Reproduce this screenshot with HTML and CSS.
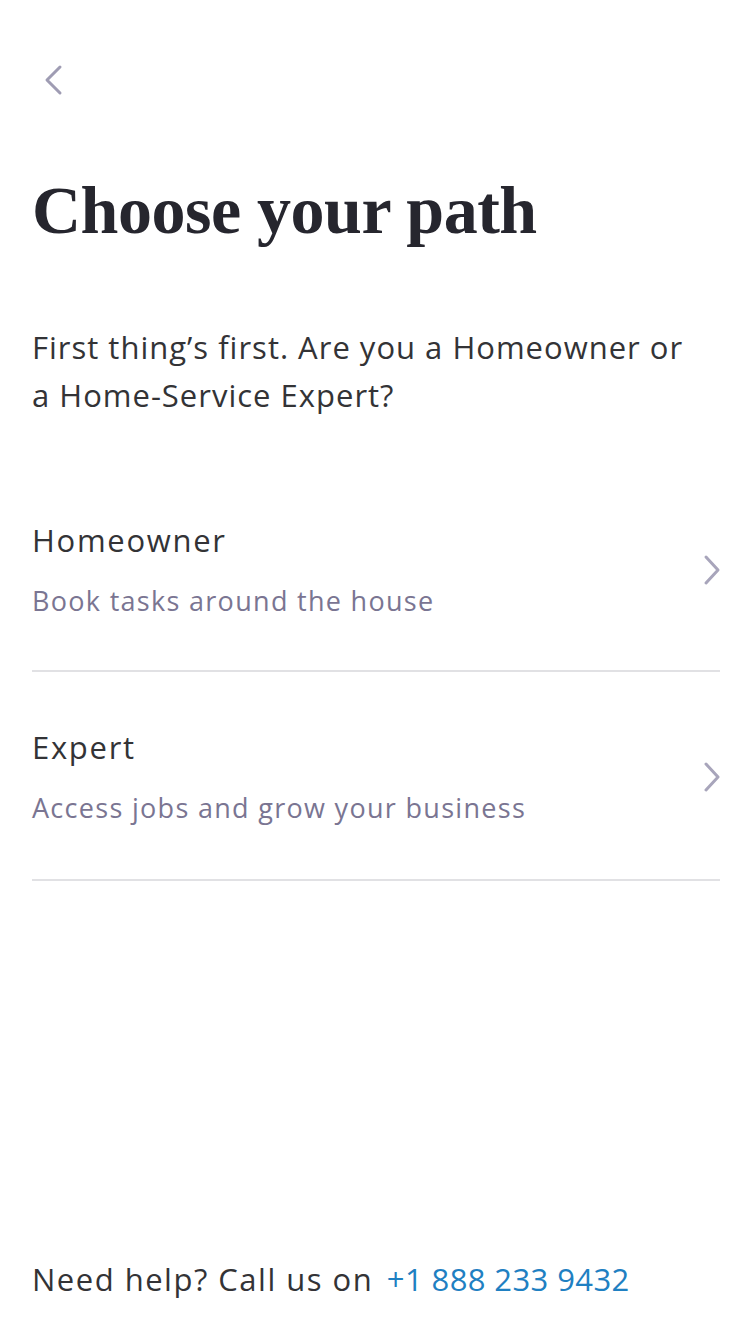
FILE: index.html
```html
<!DOCTYPE html>
<html>
<head>
<meta charset="utf-8">
<link rel="stylesheet" href="styles.css">
</head>
<body>
<div class="screen">
  <header class="top">
    <svg class="back" width="24" height="32" viewBox="0 0 24 32"><path d="M18 3 L5 16 L18 29" fill="none" stroke="#9f9cb3" stroke-width="3" stroke-linecap="round" stroke-linejoin="round"/></svg>
  </header>
  <h1 class="title">Choose your path</h1>
  <p class="intro">First thing’s first. Are you a Homeowner or a Home-Service Expert?</p>
  <ul class="options">
    <li class="option">
      <div class="texts">
        <div class="opt-title">Homeowner</div>
        <div class="opt-sub">Book tasks around the house</div>
      </div>
      <svg class="chev" width="20" height="32" viewBox="0 0 20 32"><path d="M4 3 L16 16 L4 29" fill="none" stroke="#a8a5bb" stroke-width="3" stroke-linecap="round" stroke-linejoin="round"/></svg>
    </li>
    <li class="option">
      <div class="texts">
        <div class="opt-title">Expert</div>
        <div class="opt-sub">Access jobs and grow your business</div>
      </div>
      <svg class="chev" width="20" height="32" viewBox="0 0 20 32"><path d="M4 3 L16 16 L4 29" fill="none" stroke="#a8a5bb" stroke-width="3" stroke-linecap="round" stroke-linejoin="round"/></svg>
    </li>
  </ul>
  <div class="spacer"></div>
  <footer class="help">Need help? Call us on <a class="phone">+1 888 233 9432</a></footer>
</div>
</body>
</html>
```
FILE: styles.css
```css
html, body {
  margin: 0;
  padding: 0;
  background: #ffffff;
}
.screen {
  width: 752px;
  height: 1334px;
  box-sizing: border-box;
  padding: 0 32px;
  display: flex;
  flex-direction: column;
  font-family: "Open Sans", "Noto Sans", sans-serif;
  color: #2f2f33;
}
.top {
  height: 64px;
  padding-top: 64px;
  box-sizing: content-box;
  display: flex;
  align-items: flex-start;
}
.back {
  display: block;
  margin-left: 10px;
}
.title {
  margin: 42px 0 0;
  font-family: "Liberation Serif", "DejaVu Serif", serif;
  font-weight: 700;
  font-size: 68px;
  line-height: 80px;
  color: #26262e;
  letter-spacing: -0.5px;
}
.intro {
  margin: 73px 0 0;
  max-width: 664px;
  font-size: 31px;
  line-height: 48px;
  letter-spacing: 1px;
  color: #333336;
}
.options {
  list-style: none;
  margin: 44px 0 0;
  padding: 0;
}
.option {
  display: flex;
  align-items: center;
  justify-content: space-between;
  height: 209px;
  border-bottom: 2px solid #e1e1e4;
  box-sizing: border-box;
  padding: 55px 0 49px;
}
.option + .option {
  padding-top: 53px;
  padding-bottom: 51px;
}
.texts {
  display: flex;
  flex-direction: column;
  gap: 19px;
}
.opt-title {
  font-size: 31px;
  line-height: 44px;
  letter-spacing: 1.7px;
  color: #333336;
}
.opt-sub {
  font-size: 27px;
  line-height: 40px;
  letter-spacing: 1.3px;
  color: #7a7592;
}
.chev {
  display: block;
  margin-right: -2px;
}
.spacer {
  flex: 1;
}
.help {
  font-size: 31px;
  line-height: 40px;
  letter-spacing: 1.5px;
  color: #333336;
  margin-bottom: 35px;
}
.phone {
  color: #1f80c2;
  margin-left: 4px;
  letter-spacing: 0.4px;
}
```
